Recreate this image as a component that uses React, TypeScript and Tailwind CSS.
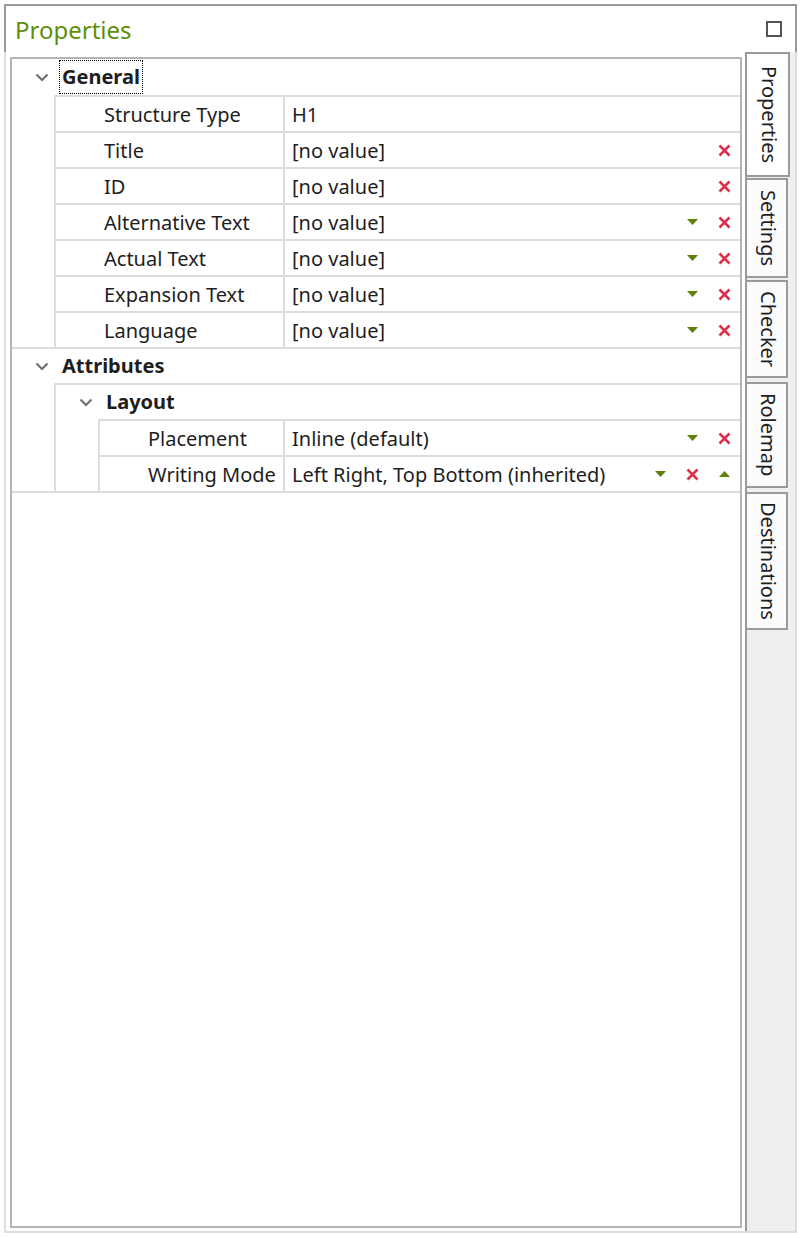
import React from "react";

type Icon = "down" | "up" | "x";
type Prop = { name: string; value: string; icons: Icon[] };

const general: Prop[] = [
  { name: "Structure Type", value: "H1", icons: [] },
  { name: "Title", value: "[no value]", icons: ["x"] },
  { name: "ID", value: "[no value]", icons: ["x"] },
  { name: "Alternative Text", value: "[no value]", icons: ["down", "x"] },
  { name: "Actual Text", value: "[no value]", icons: ["down", "x"] },
  { name: "Expansion Text", value: "[no value]", icons: ["down", "x"] },
  { name: "Language", value: "[no value]", icons: ["down", "x"] },
];

const layout: Prop[] = [
  { name: "Placement", value: "Inline (default)", icons: ["down", "x"] },
  { name: "Writing Mode", value: "Left Right, Top Bottom (inherited)", icons: ["down", "x", "up"] },
];

const tabs = [
  { label: "Properties", active: true, cls: "h-[125px]" },
  { label: "Settings", active: false, cls: "h-[100px] mt-[1px]" },
  { label: "Checker", active: false, cls: "h-[98px] mt-[2px]" },
  { label: "Rolemap", active: false, cls: "h-[106px] mt-[4px]" },
  { label: "Destinations", active: false, cls: "h-[138px] mt-[4px]" },
];

function Chevron() {
  return (
    <svg width="14" height="9" viewBox="0 0 14 9" className="shrink-0">
      <polyline points="1.5,1.5 7,7 12.5,1.5" fill="none" stroke="#707070" strokeWidth="2.2" />
    </svg>
  );
}

function RowIcon({ kind }: { kind: Icon }) {
  return (
    <div className="w-8 h-full flex items-center justify-center">
      {kind === "x" && (
        <svg width="13" height="13" viewBox="0 0 13 13">
          <path d="M1.5 1.5 L11.5 11.5 M11.5 1.5 L1.5 11.5" stroke="#d8334a" strokeWidth="2.6" />
        </svg>
      )}
      {kind === "down" && (
        <svg width="11" height="6" viewBox="0 0 11 6">
          <polygon points="0,0 11,0 5.5,6" fill="#5e800c" />
        </svg>
      )}
      {kind === "up" && (
        <svg width="11" height="6" viewBox="0 0 11 6">
          <polygon points="0,6 11,6 5.5,0" fill="#5e800c" />
        </svg>
      )}
    </div>
  );
}

function PropRow({ p }: { p: Prop }) {
  return (
    <div className="flex h-[36px] border-t-2 border-[#dcdcdc]">
      <div className="flex-1 flex items-center pl-[48px] pt-[2px] border-r-2 border-[#dcdcdc] whitespace-nowrap">
        {p.name}
      </div>
      <div className="w-[455px] shrink-0 flex items-center pl-[7px]">
        <span className="flex-1 whitespace-nowrap pt-[2px]">{p.value}</span>
        <div className="flex h-full">
          {p.icons.map((ic, i) => (
            <RowIcon key={i} kind={ic} />
          ))}
        </div>
      </div>
    </div>
  );
}

function Category({ label, focused, top }: { label: string; focused?: boolean; top?: boolean }) {
  return (
    <div className={`flex items-center h-[36px] pl-[23px] ${top ? "" : "border-t-2 border-[#dcdcdc]"}`}>
      <Chevron />
      <span
        className={`ml-[10px] font-bold px-[3px] leading-[34px] ${
          focused ? "outline-1 outline-dotted outline-black -outline-offset-1" : ""
        }`}
      >
        {label}
      </span>
    </div>
  );
}

function Children({ children }: { children: React.ReactNode }) {
  return (
    <div className="flex">
      <div className="w-[42px] shrink-0" />
      <div className="flex-1 border-l-2 border-[#dcdcdc]">{children}</div>
    </div>
  );
}

export default function App() {
  return (
    <div
      className="w-[801px] h-[1238px] bg-white pt-[4px] pl-[4px] text-[#1e1e1e] text-[20px]"
      style={{ fontFamily: '"Noto Sans", "Open Sans", sans-serif' }}
    >
      <div className="w-[793px] h-[1229px] flex flex-col">
        <div className="h-[48px] shrink-0 flex items-center justify-between border-t-2 border-x-2 border-[#9a9a9a]">
          <span className="pl-[9px] text-[24px] text-[#5e8f0a] pt-[2px]">Properties</span>
          <div className="w-[16px] h-[16px] border-2 border-[#555] mr-[13px]" />
        </div>
        <div className="flex-1 flex border-x-2 border-b-2 border-[#dddddd]">
          <div className="w-[732px] ml-[4px] mt-[5px] mb-[3px] border-2 border-[#b4b4b4]">
            <div className="border-b-2 border-[#dcdcdc]">
              <Category label="General" focused top />
              <Children>
                {general.map((p) => (
                  <PropRow key={p.name} p={p} />
                ))}
              </Children>
              <Category label="Attributes" />
              <Children>
                <Category label="Layout" />
                <Children>
                  {layout.map((p) => (
                    <PropRow key={p.name} p={p} />
                  ))}
                </Children>
              </Children>
            </div>
          </div>
          <div className="ml-[3px] flex-1 bg-[#efefef] border-l-2 border-[#9a9a9a] flex flex-col">
            {tabs.map((t) => (
              <div
                key={t.label}
                className={`${t.cls} flex items-center justify-center border-y-2 border-r-2 border-[#9a9a9a] ${
                  t.active ? "w-[43px] bg-white" : "w-[41px] bg-[#fbfbfb]"
                }`}
              >
                <span className="[writing-mode:vertical-rl] pl-[2px]">{t.label}</span>
              </div>
            ))}
          </div>
        </div>
      </div>
    </div>
  );
}
